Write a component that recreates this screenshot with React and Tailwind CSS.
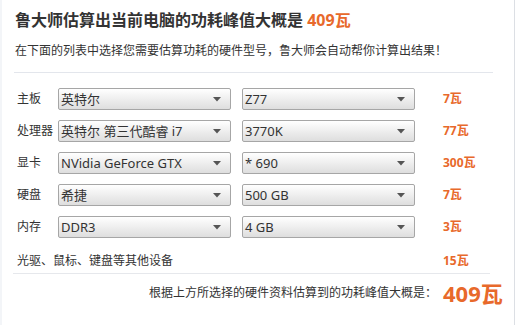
import React from 'react';

const rows = [
  { label: '主板', a: '英特尔', b: 'Z77', w: '7瓦' },
  { label: '处理器', a: '英特尔 第三代酷睿 i7', b: '3770K', w: '77瓦' },
  { label: '显卡', a: 'NVidia GeForce GTX', b: '* 690', w: '300瓦' },
  { label: '硬盘', a: '希捷', b: '500 GB', w: '7瓦' },
  { label: '内存', a: 'DDR3', b: '4 GB', w: '3瓦' },
];

const FakeSelect = ({ value }) => (
  <div className="w-[173px] h-[22px] flex items-center justify-between border border-[#a6a6a6] rounded-[2px] bg-gradient-to-b from-white to-[#dedede] pl-[2px] pr-[9px] text-[13px] text-[#333] leading-none">
    <span className="whitespace-nowrap">{value}</span>
    <svg width="8" height="5" viewBox="0 0 8 5">
      <path d="M0 0h8L4 4.5z" fill="#555" />
    </svg>
  </div>
);

const App = () => {
  return (
    <div
      className="w-[515px] h-[325px] bg-white border-l-2 border-l-[#f3f5f8] border-r border-r-[#dcdfe4] text-[#333]"
      style={{ fontFamily: '"Noto Sans", "Noto Sans CJK SC", sans-serif' }}
    >
      {/* Title */}
      <div className="pt-[10px] pl-[13px] text-[16px] leading-[20px] font-bold whitespace-nowrap">
        鲁大师估算出当前电脑的功耗峰值大概是 <span className="text-[#e8692b]">409瓦</span>
      </div>
      <div className="mt-[13px] pl-[13px] text-[12px] leading-[16px] whitespace-nowrap">
        在下面的列表中选择您需要估算功耗的硬件型号，鲁大师会自动帮你计算出结果！
      </div>
      <div className="mt-[13px] ml-[12px] w-[479px] h-px bg-[#e3e6ec]" />

      {/* Hardware rows */}
      <div className="mt-[15px] flex flex-col gap-[10px]">
        {rows.map((r) => (
          <div key={r.label} className="flex items-center pl-[15px]">
            <span className="w-[41px] text-[12px] whitespace-nowrap">{r.label}</span>
            <FakeSelect value={r.a} />
            <div className="ml-[11px]">
              <FakeSelect value={r.b} />
            </div>
            <span className="ml-[28px] text-[12px] font-bold text-[#e8692b]">{r.w}</span>
          </div>
        ))}
      </div>

      <div className="mt-[15px] flex items-center pl-[15px] text-[12px] leading-[16px]">
        <span className="w-[426px]">光驱、鼠标、键盘等其他设备</span>
        <span className="font-bold text-[#e8692b]">15瓦</span>
      </div>
      <div className="mt-[4px] ml-[11px] w-[477px] h-px bg-[#e6e8ec]" />

      <div className="mt-[5px] h-[28px] flex items-center pl-[15px]">
        <span className="w-[420px] text-right text-[12px] whitespace-nowrap">根据上方所选择的硬件资料估算到的功耗峰值大概是：</span>
        <span className="ml-[6px] text-[22px] font-bold text-[#e8692b] leading-none">409瓦</span>
      </div>
    </div>
  );
};

export default App;
